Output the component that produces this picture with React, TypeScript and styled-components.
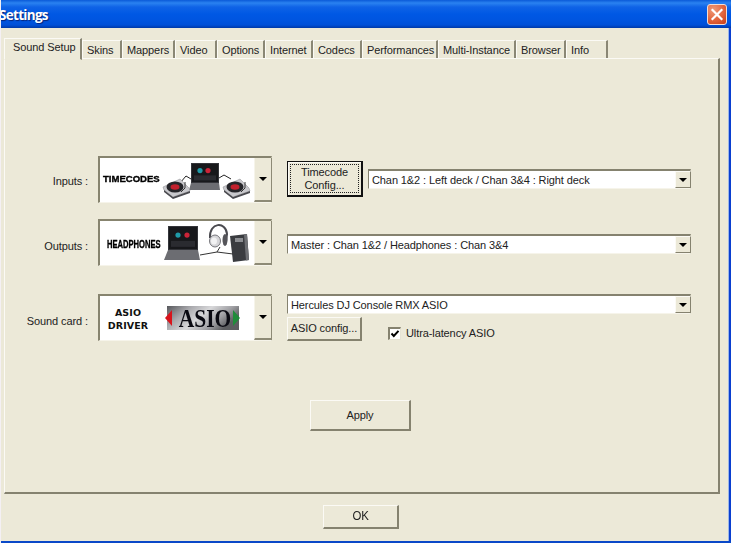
import React from "react";
import styled, { createGlobalStyle, css } from "styled-components";

const Global = createGlobalStyle`
  html, body { margin: 0; padding: 0; background: #ece9d8; }
  body { width: 731px; height: 543px; overflow: hidden; font-family: "Liberation Sans", Arial, sans-serif; font-size: 11px; letter-spacing: -0.1px; color: #222; }
  #root { width: 731px; height: 543px; }
`;

const Win = styled.div`
  position: relative; width: 731px; height: 543px; overflow: hidden; background: #ece9d8;
  border-left: 1px solid #f4f0f4; box-sizing: border-box;
`;
const RightEdge = styled.div`
  position: absolute; right: 0; top: 28px; bottom: 0; width: 2px;
  background: #0a3fd0; box-shadow: -1px 0 0 #9db6e8;
`;
const BottomEdge = styled.div`
  position: absolute; left: 0; right: 0; bottom: 0; height: 2px; background: #0a49c8;
`;
const TitleBar = styled.div`
  position: absolute; left: -1px; right: 0; top: 0; height: 28px;
  background: linear-gradient(180deg, #0a5ad8 0, #2a82f0 3px, #0f63e6 7px, #0058e4 14px, #0055e0 20px, #0050d8 25px, #0039a8 28px);
`;
const TitleText = styled.div`
  position: absolute; left: -1px; top: 7px; color: #fff; font: bold 13.5px/16px "Open Sans", "DejaVu Sans", sans-serif;
  letter-spacing: -0.7px; text-shadow: 1px 1px 1px #06257a;
`;
const Close = styled.div`
  position: absolute; left: 707px; top: 4px; width: 20px; height: 21px; box-sizing: border-box;
  border: 1px solid #f2ddd4; border-radius: 3px;
  background: radial-gradient(circle at 30% 25%, #ee9a78 0, #e2643c 55%, #c63c16 100%);
  svg { display: block; }
`;

const TabRow = styled.div`
  position: absolute; left: 3px; top: 37px; height: 22px; display: flex; align-items: flex-end;
`;
const Tab = styled.div<{ $w: number; $active?: boolean }>`
  position: relative; box-sizing: border-box; width: ${(p) => p.$w}px; height: 19px;
  border-top: 1px solid #fbfaf5; border-left: 1px solid #fbfaf5; border-right: 2px solid #8a8775;
  padding: 3px 0 0 4px; white-space: nowrap; line-height: 13px; background: #ece9d8;
  ${(p) => p.$active && css`
    height: 22px; padding: 2px 0 0 8px; z-index: 2; margin-bottom: -1px;
    border-bottom: 1px solid #ece9d8;
  `}
`;
const Panel = styled.div`
  position: absolute; left: 3px; top: 58px; width: 716px; height: 436px; box-sizing: border-box;
  border-top: 1px solid #fbfaf5; border-left: 1px solid #fbfaf5;
  border-right: 2px solid #85826f; border-bottom: 2px solid #85826f;
`;

const FieldLabel = styled.div<{ $top: number }>`
  position: absolute; right: 643px; top: ${(p) => p.$top}px; line-height: 14px; white-space: nowrap;
`;
const Picker = styled.div<{ $top: number }>`
  position: absolute; left: 97px; top: ${(p) => p.$top}px; width: 174px; height: 47px; box-sizing: border-box;
  background: #fff; border-top: 2px solid #87846f; border-left: 2px solid #87846f;
  border-right: 1px solid #d8d5c4; border-bottom: 1px solid #f6f4ea;
  svg.art { position: absolute; left: -2px; top: -2px; filter: blur(0.25px); }
`;
const PickerArrow = styled.div`
  position: absolute; right: -1px; top: 0; bottom: 0; width: 18px; background: #ece9d8; box-sizing: border-box;
  border-left: 1px solid #f6f4ea; border-right: 1px solid #8d8a76; border-bottom: 2px solid #8d8a76;
  display: flex; align-items: center; justify-content: center;
`;
const Tri = styled.span`
  display: block; width: 0; height: 0; border-left: 4px solid transparent; border-right: 4px solid transparent; border-top: 4px solid #000;
`;
const LogoWord = styled.span<{ $x: number; $y: number; $scale: number; $size: number }>`
  position: absolute; left: ${(p) => p.$x}px; top: ${(p) => p.$y}px; color: #000; white-space: nowrap; letter-spacing: 0;
  font: 900 ${(p) => p.$size}px/12px "Liberation Sans", Arial, sans-serif; -webkit-text-stroke: 0.35px #000;
  transform: scaleX(${(p) => p.$scale}); transform-origin: 0 50%;
`;
const DriverWord = styled.div`
  position: absolute; left: -2px; top: 10px; width: 60px; text-align: center; color: #111; letter-spacing: 0.1px;
  font: bold 9.5px/13px "DejaVu Sans", sans-serif;
`;
const AsioWord = styled.span`
  position: absolute; left: 72px; top: 10px; width: 66px; text-align: center; color: #0a0a12;
  font: bold 25px/26px "Liberation Serif", serif; letter-spacing: 0; transform: scaleX(0.86);
`;

const Combo = styled.div<{ $x: number; $y: number; $w: number }>`
  position: absolute; left: ${(p) => p.$x}px; top: ${(p) => p.$y}px; width: ${(p) => p.$w}px; height: 20px; box-sizing: border-box;
  background: #fff; border-top: 2px solid #85826f; border-left: 1px solid #85826f; border-right: 1px solid #d8d5c4; border-bottom: 1px solid #f6f4ea;
  padding: 2px 0 0 3px; line-height: 14px; white-space: nowrap;
`;
const ComboArrow = styled.div`
  position: absolute; right: -1px; top: 0; width: 16px; height: 17px; box-sizing: border-box; background: #ece9d8;
  border-left: 1px solid #fbfaf5; border-top: 1px solid #fbfaf5; border-right: 1px solid #85826f; border-bottom: 1px solid #85826f;
  display: flex; align-items: center; justify-content: center;
`;
const SmallTri = styled.span`
  display: block; width: 0; height: 0; border-left: 4px solid transparent; border-right: 4px solid transparent; border-top: 4px solid #000;
`;
const Btn = styled.div<{ $x: number; $y: number; $w: number; $h: number; $focus?: boolean }>`
  position: absolute; left: ${(p) => p.$x}px; top: ${(p) => p.$y}px; width: ${(p) => p.$w}px; height: ${(p) => p.$h}px;
  box-sizing: border-box; background: #ece9d8; text-align: center; line-height: 13px;
  display: flex; align-items: center; justify-content: center;
  border-top: 1px solid #fbfaf5; border-left: 1px solid #fbfaf5; border-right: 2px solid #85826f; border-bottom: 2px solid #85826f;
  ${(p) => p.$focus && css`
    border: 1px solid #111; border-right-width: 2px; border-bottom-width: 2px;
    box-shadow: inset 1px 1px 0 #fbfaf5;
    &::after { content: ""; position: absolute; inset: 2px; border: 1px dotted #222; }
  `}
`;
const OkLabel = styled.span`
  font-size: 12px; transform: scaleX(0.95);
`;
const Check = styled.div`
  position: absolute; left: 387px; top: 327px; width: 13px; height: 13px; box-sizing: border-box; background: #fff;
  border-top: 2px solid #85826f; border-left: 2px solid #85826f; border-right: 1px solid #e6e3d4; border-bottom: 1px solid #e6e3d4;
  svg { display: block; }
`;
const CheckLabel = styled.div`
  position: absolute; left: 405px; top: 326px; line-height: 14px; white-space: nowrap;
`;

const Turntable = ({ x, y }: { x: number; y: number }) => (
  <g transform={`translate(${x} ${y})`}>
    <path d="M0 8 L17 0 L26 9 L27 12 L10 18 L1 11 Z" fill="#c9c9cd" stroke="#8a8a8f" strokeWidth="0.5" />
    <path d="M1 11 L10 18 L27 12 L27 14 L10 20 L1 13 Z" fill="#4a4a4f" />
    <ellipse cx="12" cy="8" rx="8.5" ry="5.5" fill="#26262a" />
    <ellipse cx="12" cy="8" rx="4.5" ry="2.8" fill="#c21f2c" />
    <path d="M22 3 L22 9 L18 13" fill="none" stroke="#333" strokeWidth="1" />
  </g>
);
const Laptop = ({ sx, sy, sw, sh, bx, bw, bh, dot1, dot2 }: { sx: number; sy: number; sw: number; sh: number; bx: number; bw: number; bh: number; dot1: number; dot2: number }) => (
  <g>
    <rect x={sx} y={sy} width={sw} height={sh} fill="#34353a" />
    <rect x={sx + 1} y={sy + 1} width={sw - 2} height={sh - 2} fill="#17181b" />
    <circle cx={dot1} cy={sy + sh * 0.38} r="2.6" fill="#1f9aa8" />
    <circle cx={dot2} cy={sy + sh * 0.38} r="2.6" fill="#cc2438" />
    <rect x={sx + 3} y={sy + sh * 0.62} width={sw - 6} height={sh * 0.25} fill="#2a2b30" />
    <path d={`M${sx} ${sy + sh} H${sx + sw} L${bx + bw} ${sy + sh + bh} H${bx} Z`} fill="#6c6d72" />
  </g>
);

const TimecodesArt = () => (
  <svg className="art" width="156" height="47" viewBox="0 0 156 47" aria-hidden>
    <path d="M82 27 L88 20 L93 23" fill="none" stroke="#222" strokeWidth="1" />
    <path d="M121 22 L126 19 L133 23" fill="none" stroke="#222" strokeWidth="1" />
    <Laptop sx={93} sy={7} sw={28} sh={20} bx={91} bw={31} bh={7} dot1={102} dot2={110} />
    <Turntable x={65} y={23} />
    <Turntable x={125} y={23} />
  </svg>
);
const HeadphonesArt = () => (
  <svg className="art" width="156" height="47" viewBox="0 0 156 47" aria-hidden>
    <Laptop sx={70} sy={7} sw={30} sh={24} bx={66} bw={36} bh={10} dot1={80} dot2={89} />
    <path d="M102 36 L119 33 L122 28 M119 33 L135 35" fill="none" stroke="#333" strokeWidth="1" />
    <path d="M112 19 C111 3 128 2 129 15 L128 23" fill="none" stroke="#4a4a4f" strokeWidth="2" />
    <ellipse cx="117" cy="22" rx="5.5" ry="6" fill="#d6d6d9" stroke="#77777c" />
    <ellipse cx="116" cy="22" rx="3" ry="3.6" fill="#f2f2f3" />
    <ellipse cx="127" cy="21" rx="2.5" ry="6" fill="#55555a" />
    <path d="M132 17 L149 15 L151 41 L135 43 Z" fill="#3a3c40" />
    <path d="M146 15.5 L149 15 L151 41 L148 41.5 Z" fill="#6e7074" />
    <rect x="137" y="19" width="8" height="4" fill="#8c8e92" />
  </svg>
);
const AsioArt = () => (
  <svg className="art" width="156" height="47" viewBox="0 0 156 47" aria-hidden>
    <defs>
      <linearGradient id="asio" x1="0" x2="1" y1="0" y2="0.4">
        <stop offset="0" stopColor="#55565a" />
        <stop offset="0.3" stopColor="#a9a9ad" />
        <stop offset="0.55" stopColor="#d8d8da" />
        <stop offset="0.8" stopColor="#a0a0a4" />
        <stop offset="1" stopColor="#5c5d60" />
      </linearGradient>
    </defs>
    <rect x="69" y="12" width="72" height="24" fill="url(#asio)" />
    <path d="M74 16 L67 24 L74 32 Z" fill="#d8141c" />
    <path d="M135 16 L142 24 L135 32 Z" fill="#1f8c3a" />
  </svg>
);

const tabs: [string, number][] = [
  ["Skins", 40], ["Mappers", 53], ["Video", 42], ["Options", 48], ["Internet", 48], ["Codecs", 49],
  ["Performances", 76], ["Multi-Instance", 78], ["Browser", 50], ["Info", 42],
];

export default function App() {
  return (
    <Win>
      <Global />
      <TitleBar>
        <TitleText>Settings</TitleText>
        <Close>
          <svg width="18" height="19" viewBox="0 0 18 19" aria-hidden>
            <path d="M4.5 5 L13.5 14 M13.5 5 L4.5 14" stroke="#fff" strokeWidth="2.2" strokeLinecap="square" />
          </svg>
        </Close>
      </TitleBar>
      <TabRow>
        <Tab $w={78} $active>Sound Setup</Tab>
        {tabs.map(([t, w]) => <Tab key={t} $w={w}>{t}</Tab>)}
      </TabRow>
      <Panel />

      <FieldLabel $top={174}>Inputs :</FieldLabel>
      <Picker $top={156}>
        <TimecodesArt />
        <LogoWord $x={3} $y={15} $scale={1.06} $size={9}>TIMECODES</LogoWord>
        <PickerArrow><Tri /></PickerArrow>
      </Picker>

      <FieldLabel $top={239}>Outputs :</FieldLabel>
      <Picker $top={219}>
        <HeadphonesArt />
        <LogoWord $x={7} $y={17} $scale={0.69} $size={11}>HEADPHONES</LogoWord>
        <PickerArrow><Tri /></PickerArrow>
      </Picker>

      <FieldLabel $top={314}>Sound card :</FieldLabel>
      <Picker $top={294}>
        <AsioArt />
        <DriverWord>ASIO<br />DRIVER</DriverWord>
        <AsioWord>ASIO</AsioWord>
        <PickerArrow><Tri /></PickerArrow>
      </Picker>

      <Btn $x={286} $y={161} $w={76} $h={36} $focus>Timecode<br />Config...</Btn>
      <Combo $x={367} $y={169} $w={323}>Chan 1&amp;2 : Left deck / Chan 3&amp;4 : Right deck<ComboArrow><SmallTri /></ComboArrow></Combo>
      <Combo $x={286} $y={234} $w={404}>Master : Chan 1&amp;2 / Headphones : Chan 3&amp;4<ComboArrow><SmallTri /></ComboArrow></Combo>
      <Combo $x={286} $y={294} $w={404}>Hercules DJ Console RMX ASIO<ComboArrow><SmallTri /></ComboArrow></Combo>
      <Btn $x={286} $y={317} $w={75} $h={24}>ASIO config...</Btn>
      <Check>
        <svg width="10" height="10" viewBox="0 0 10 10" aria-hidden>
          <path d="M1.5 4.5 L3.8 7 L8.5 1.8" fill="none" stroke="#000" strokeWidth="2" />
        </svg>
      </Check>
      <CheckLabel>Ultra-latency ASIO</CheckLabel>
      <Btn $x={309} $y={400} $w={101} $h={31}>Apply</Btn>
      <Btn $x={322} $y={505} $w={76} $h={24}><OkLabel>OK</OkLabel></Btn>
      <RightEdge />
      <BottomEdge />
    </Win>
  );
}
